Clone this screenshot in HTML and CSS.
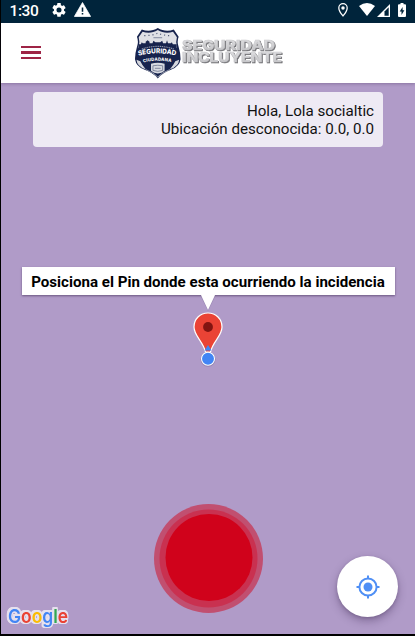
FILE: index.html
```html
<!DOCTYPE html>
<html lang="es">
<head>
<meta charset="utf-8">
<title>Seguridad Incluyente</title>
<link rel="stylesheet" href="styles.css">
</head>
<body>
<div class="phone">
  <div class="status">
    <span class="time">1:30</span>
    <svg class="gear" width="14" height="14" viewBox="2 2 20 20"><path fill="#fff" d="M19.14 12.94c.04-.3.06-.61.06-.94s-.02-.64-.07-.94l2.03-1.58a.5.5 0 0 0 .12-.61l-1.92-3.32a.49.49 0 0 0-.59-.22l-2.39.96a7 7 0 0 0-1.62-.94l-.36-2.54A.48.48 0 0 0 13.92 2h-3.84a.48.48 0 0 0-.47.41l-.36 2.54c-.59.24-1.13.57-1.62.94l-2.39-.96a.48.48 0 0 0-.59.22L2.74 8.87a.48.48 0 0 0 .12.61l2.03 1.58c-.05.3-.09.63-.09.94s.02.64.07.94l-2.03 1.58a.5.5 0 0 0-.12.61l1.92 3.32c.12.22.37.29.59.22l2.39-.96c.5.38 1.03.7 1.62.94l.36 2.54c.05.24.24.41.48.41h3.84c.24 0 .44-.17.47-.41l.36-2.54c.59-.24 1.13-.56 1.62-.94l2.39.96c.22.08.47 0 .59-.22l1.92-3.32a.48.48 0 0 0-.12-.61zM12 15.600a3.600 3.600 0 1 1 0-7.200 3.600 3.600 0 0 1 0 7.200z"/></svg>
    <svg class="warn" width="17" height="15" viewBox="1 2 22 19"><path fill="#fff" stroke="#fff" stroke-linejoin="round" d="M1.500 20.500h21L12 2.500z"/><path fill="#00243b" d="M11 16h2v2h-2zM11 9h2v5.500h-2z"/></svg>
    <span class="space"></span>
    <svg class="loc" width="10" height="14" viewBox="5 2 14 20"><path fill="none" stroke="#fff" stroke-width="1.800" d="M12 3a6 6 0 0 0-6 6c0 4.500 6 11.500 6 11.500S18 13.500 18 9a6 6 0 0 0-6-6z"/><circle cx="12" cy="9" r="2.500" fill="#fff"/></svg>
    <svg class="wifi" width="16" height="13" viewBox="0 0 16 13"><path fill="#fff" d="M0 3Q8-3 16 3L8 13z"/></svg>
    <svg class="signal" width="13" height="13" viewBox="0 0 13 13"><path fill="#fff" d="M13 0v13H0z"/><path fill="#00243b" d="M7.500 7.500 11.700 3.200v8.500H7.500z"/></svg>
    <svg class="battery" width="8" height="14" viewBox="0 0 8 14"><path fill="#fff" d="M2.500 0h3v1.200H7q1 0 1 1V13q0 1-1 1H1q-1 0-1-1V2.200q0-1 1-1h1.500z"/><path fill="#00243b" d="M4.600 4 1.700 8.400h1.800V12l2.900-4.800H4.600z"/></svg>
  </div>
  <header class="bar">
    <div class="menu"><i></i><i></i><i></i></div>
    <svg class="logo" width="152" height="54" viewBox="0 0 152 54">
      <defs>
        <linearGradient id="metal" x1="0" y1="0" x2="0" y2="1"><stop offset="0" stop-color="#e2e2e4"/><stop offset="1" stop-color="#bebec1"/></linearGradient>
      </defs>
      <g transform="translate(1 0) scale(.97 1.02)">
      <path fill="#17234d" d="M23.500 1c5 3 11 3.500 16.500 1.500L45 9.500q-2 5 0 10 2 6 2 12-1 7-10 10.500-9 3-13.500 8.500Q19 45 10 42 1 38.500 0 31.500q0-6 2-12 2-5 0-10L7 2.500C12.500 4.500 18.500 4 23.500 1z"/>
      <path fill="#dfe0e5" d="M23.500 3c5 3 10.500 3.300 15.700 1.700l4 5.300q-1.500 5 0 9v2H3.800v-2q1.500-4 0-9l4-5.300C13 6.300 18.500 6 23.500 3z"/>
      <path fill="none" stroke="#555d7a" stroke-width="1.200" stroke-dasharray="1.200 3" d="M9.500 8.500q8 0 14-2.500 6 2.500 14 2.500"/>
      <path fill="none" stroke="#8289a0" stroke-width="1" d="M19 10.500h9"/>
      <path fill="#17234d" d="M4 22v-5h2l1-2 1 1h3v-1.500l2-1.500 2 1.500V16h3l1-2.500 2 1.500h5l2-1.500 1 2.500h3l1-3 1 3h3l1-1 1 2h4v5z"/>
      <path fill="#17234d" d="M2.500 21q21-6 42 0l2 10-5 3q-18-4-36 0l-5-3z"/>
      <path fill="none" stroke="#8f96ab" stroke-width="1.100" stroke-dasharray="1.200 .7" d="M7 21.500q16.500-5 33 0"/>
      <path fill="#d5d7dd" d="M1.500 32l4 1.500 2 3.500 3.500 4.500q-9-3-9.500-9.500zm44 0-4 1.500-2 3.500-3.500 4.500q9-3 9.500-9.500z"/>
      <path fill="none" stroke="#aeb3c0" stroke-width=".8" d="M11 41.700q8.500 3 12.500 7.300 4-4.300 12.500-7.300"/>
      <path id="arc-top" fill="none" d="M3.500 28.300q20-5 40 0"/>
      <path id="arc-low" fill="none" d="M8.500 34.800q15-3.400 30 0"/>
      <text class="crest"><textPath href="#arc-top" textLength="39">SEGURIDAD</textPath></text>
      <text class="crest small"><textPath href="#arc-low" textLength="29">CIUDADANA</textPath></text>
      <path fill="#d7dae1" d="M16.500 36q7-2 14 0v7q-3 2.500-7 2.500t-7-2.500z"/>
      <path fill="none" stroke="#6b738e" stroke-width=".8" d="M18.500 38q5-1 10 0v4.500q-5 2-10 0zM20.500 40.500h6"/>
      </g>
      <g class="wordmark">
        <text x="48" y="22.500" textLength="93" lengthAdjust="spacingAndGlyphs">SEGURIDAD</text>
        <text x="48" y="35.300" textLength="100" lengthAdjust="spacingAndGlyphs">INCLUYENTE</text>
      </g>
    </svg>
  </header>
  <main class="map">
    <section class="card">
      <p class="hello">Hola, Lola socialtic</p>
      <p class="place">Ubicación desconocida: 0.0, 0.0</p>
    </section>
    <div class="callout">Posiciona el Pin donde esta ocurriendo la incidencia</div>
    <svg class="pin" width="40" height="74" viewBox="0 0 40 74">
      <path fill="#8f7da8" opacity=".6" d="M12.500 1h15L20 16z"/>
      <path fill="#fff" d="M13 0h14l-7 15z"/>
      <path fill="#ea4335" stroke="#fff" stroke-width="1.200" d="M20 18c-8 0-14 6-14 14 0 9 9 14 11.500 25h5C25 46 34 41 34 32c0-8-6-14-14-14z"/>
      <circle cx="20" cy="32" r="4.900" fill="#811411"/>
      <path fill="#4285f4" d="M20 50l3.500 5.500h-7z"/>
      <path fill="#fff" d="M17 57h6v1h-6z"/>
      <circle cx="20" cy="64.300" r="7.500" fill="#7e6d98" opacity=".5"/>
      <circle cx="20" cy="63.700" r="6.500" fill="#4285f4" stroke="#fff" stroke-width="1.100"/>
    </svg>
    <svg class="panic" width="109" height="109" viewBox="0 0 109 109">
      <circle cx="54.500" cy="54.500" r="54.500" fill="#c14f70"/>
      <circle cx="54.500" cy="54.500" r="49" fill="#c93150"/>
      <circle cx="55" cy="53.500" r="43.500" fill="#d0021b"/>
    </svg>
    <div class="locate">
      <svg width="24" height="24" viewBox="0 0 24 24"><circle cx="12" cy="12" r="4.500" fill="#4f8ff5"/><circle cx="12" cy="12" r="8.600" fill="none" stroke="#4f8ff5" stroke-width="2"/><path stroke="#4f8ff5" stroke-width="2" d="M12 .5v3m0 17v3M.5 12h3m17 0h3"/></svg>
    </div>
    <svg class="google" width="66" height="28" viewBox="0 0 66 28">
      <text x="2" y="19" textLength="60" lengthAdjust="spacingAndGlyphs"><tspan class="blue">G</tspan><tspan class="red">o</tspan><tspan class="yellow">o</tspan><tspan class="blue">g</tspan><tspan class="green">l</tspan><tspan class="red">e</tspan></text>
    </svg>
  </main>
</div>
</body>
</html>
```
FILE: styles.css
```css
* { box-sizing: border-box; }
body { margin: 0; background: #000; font-family: Roboto, sans-serif; }
svg { display: block; flex: none; }
.phone { width: 415px; height: 636px; padding: 0 0 2px 1px; display: flex; flex-direction: column; overflow: hidden; }
.status { height: 23px; flex: none; background: #00243b; display: flex; align-items: flex-start; padding: 0 9px 0 8.5px; color: #fff; }
.time { font-size: 15.5px; line-height: 22px; font-weight: 500; width: 42px; letter-spacing: -.4px; }
.gear { margin-top: 3px; }
.warn { margin: 2px 0 0 8px; }
.space { flex: 1; }
.loc { margin: 3px 11px 0 0; }
.wifi { margin: 3px 2px 0 0; }
.signal { margin: 4px 8px 0 0; }
.battery { margin: 3px 0 0; }
.bar { height: 60px; flex: none; background: #fff; display: flex; align-items: flex-start; position: relative; z-index: 1; box-shadow: 0 1px 3px rgba(50, 30, 70, .3); }
.menu { width: 20px; margin: 23px 0 0 20px; display: flex; flex-direction: column; gap: 3px; }
.menu i { height: 2.4px; background: #9e2445; }
.logo { margin: 4px 0 0 93px; }
.crest { font: 800 6.6px Inter, sans-serif; fill: #fff; }
.crest.small { font-size: 4.4px; }
.wordmark { font: 800 12.5px Inter, sans-serif; fill: url(#metal); stroke: #cacacd; stroke-width: .5px; filter: drop-shadow(1px 1px 0 #707074); }
.map { flex: 1; position: relative; background: #b09bc8; display: flex; flex-direction: column; align-items: center; }
.card { align-self: flex-start; width: 350px; height: 55px; margin: 9px 0 0 32px; padding: 10.4px 9px 0 0; border-radius: 4px; background: #eeeaf4; color: #111; text-align: right; font-size: 15.15px; line-height: 18px; }
.card p { margin: 0; }
.callout { width: 373px; height: 28px; margin-top: 120px; background: #fff; color: #000; font-size: 15.1px; font-weight: 700; line-height: 30px; text-align: center; white-space: nowrap; box-shadow: 0 1px 2px rgba(50, 30, 70, .55); }
.pin { position: relative; z-index: 1; }
.panic { margin-top: 135px; }
.locate { position: absolute; right: 17px; bottom: 17px; width: 61px; height: 61px; border-radius: 50%; background: #fff; display: grid; place-items: center; box-shadow: 0 4px 9px rgba(50, 30, 70, .35), 0 1px 3px rgba(50, 30, 70, .2); }
.google { position: absolute; left: 5px; bottom: 2px; font: 600 19px Inter, sans-serif; overflow: visible; filter: drop-shadow(1.2px 0 0 #e6e0ee) drop-shadow(-1.2px 0 0 #e6e0ee) drop-shadow(0 1.2px 0 #e6e0ee) drop-shadow(0 -1.2px 0 #e6e0ee); }
.blue { fill: #4285f4; }
.red { fill: #ea4335; }
.yellow { fill: #fbbc05; }
.green { fill: #34a853; }
```
